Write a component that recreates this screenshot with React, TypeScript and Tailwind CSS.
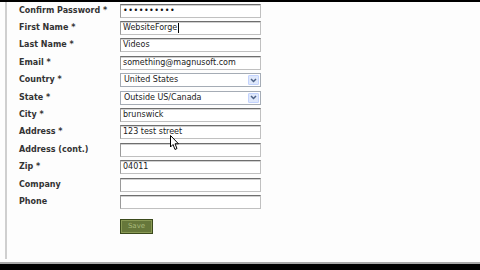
import React from "react";

const FIELDS: { label: string; value?: string; kind?: "text" | "password" | "select" }[] = [
  { label: "Confirm Password *", value: "••••••••••", kind: "password" },
  { label: "First Name *", value: "WebsiteForge" },
  { label: "Last Name *", value: "Videos" },
  { label: "Email *", value: "something@magnusoft.com" },
  { label: "Country *", value: "United States", kind: "select" },
  { label: "State *", value: "Outside US/Canada", kind: "select" },
  { label: "City *", value: "brunswick" },
  { label: "Address *", value: "123 test street" },
  { label: "Address (cont.)", value: "" },
  { label: "Zip *", value: "04011" },
  { label: "Company", value: "" },
  { label: "Phone", value: "" },
];

function Field({ value, kind, caret }: { value?: string; kind?: string; caret?: boolean }) {
  if (kind === "select") {
    return (
      <div className="flex h-[14px] w-[141px] items-stretch border border-[#a5acb5] bg-white">
        <span className="flex-1 pl-[3px] leading-[12px] text-[#222]">{value}</span>
        <span className="m-[1px] flex w-[11px] items-center justify-center rounded-[1px] border border-[#c3d3fd] bg-[#dfe8fb]">
          <svg width="7" height="5" viewBox="0 0 7 5">
            <path d="M1 1 L3.5 3.5 L6 1" fill="none" stroke="#4d6185" strokeWidth="1.5" />
          </svg>
        </span>
      </div>
    );
  }
  return (
    <div className="flex h-[14px] w-[141px] items-center border border-[#c0c0c0] border-t-[#6e6e6e] border-l-[#9a9a9a] bg-white pl-[2px] shadow-[inset_0_1px_0_#d0d0d0]">
      <span className={kind === "password" ? "tracking-[0.5px] text-[#111]" : "text-[#222]"}>{value}</span>
      {caret && <span className="ml-[1px] h-[10px] w-px bg-black" />}
    </div>
  );
}

export default function App() {
  return (
    <div
      className="relative flex h-[270px] w-[480px] flex-col overflow-hidden bg-[#fdfdfd]"
      style={{ fontFamily: '"DejaVu Sans", Verdana, sans-serif' }}
    >
      <div className="relative z-10 h-[2px] bg-black" />
      <div className="flex flex-1">
        <div className="w-[5px]" />
        <div className="mb-[3px] w-[2px] bg-[#cfcfcf]" />
        <div className="ml-[12px] flex flex-col text-[8px]">
          {FIELDS.map((f, i) => (
            <div key={f.label} className="flex h-[17.4px] items-center">
              <span className="w-[101px] font-bold text-[#333]">{f.label}</span>
              <Field value={f.value} kind={f.kind} caret={i === 1} />
            </div>
          ))}
          <div className="mt-[8px] pl-[101px]">
            <button className="h-[15px] w-[33px] border border-[#3b4a1c] bg-[#66773a] text-[7px] text-[#a9b97a] shadow-[inset_0_0_0_1px_#8a9a55]">
              Save
            </button>
          </div>
        </div>
      </div>
      <div className="h-[2px] bg-[#a8a8a8]" />
      <div className="h-[6px] bg-black" />
      {/* mouse pointer */}
      <svg className="absolute left-[170px] top-[135px]" width="10" height="16" viewBox="0 0 10 16">
        <path d="M0.5 0.5 L0.5 12 L3 9.5 L5 14.5 L7 13.5 L5 8.8 L8.5 8.8 Z" fill="#fff" stroke="#000" strokeWidth="1" />
      </svg>
    </div>
  );
}
